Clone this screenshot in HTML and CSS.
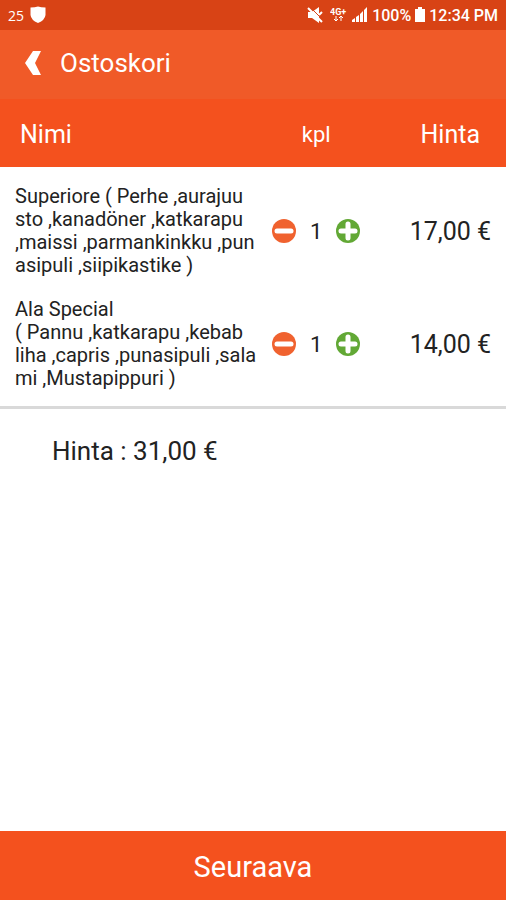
FILE: index.html
```
<!DOCTYPE html>
<html lang="fi">
<head>
<meta charset="utf-8">
<meta name="viewport" content="width=device-width, initial-scale=1">
<title>Ostoskori</title>
<link rel="stylesheet" href="styles.css">
</head>

<body>
<div class="status">
	<span class="temp">25</span>
	<svg class="shield" width="16" height="18" viewBox="0 0 16 18"><path d="M0.500 1.500Q5 1.500 8 0.500Q11 1.500 15.500 1.500V9Q15 14 8 17Q1 14 0.500 9Z" fill="#fff"/></svg>
	<div class="status-right">
		<svg width="16" height="18" viewBox="0 0 16 18"><path d="M1 6H5L12 1V17L5 12H1Z" fill="#fff"/><path d="M3 1L16 14" stroke="#d84315" stroke-width="1"/><path d="M1 2L15 16M12 9L15 6" stroke="#fff" stroke-width="2"/></svg>
		<svg class="net" width="17" height="18" viewBox="0 0 17 18"><text x="0" y="9" class="net-text">4G+</text><path d="M6 10V15M4 13L6 15L8 13M11 15V10M9 12L11 10L13 12" fill="none" stroke="#fff" stroke-width="1"/></svg>
		<svg class="signal" width="17" height="18" viewBox="0 0 17 18"><path d="M1 16V14L4 12V16ZM5 16V11L8 9V16ZM9 16V8L12 5V16ZM13 16V4L16 1V16Z" fill="#fff"/></svg>
		<span class="level">100%</span>
		<svg class="battery" width="10" height="18" viewBox="0 0 10 18"><path d="M3 1H7V3H10V16H0V3H3Z" fill="#fff"/></svg>
		<span class="time">12:34 PM</span>
	</div>
</div>
<header class="bar">
	<button type="button" class="back" aria-label="Takaisin"><svg width="18" height="26" viewBox="0 0 18 26"><path d="M9 1H17L11 13L17 25H9L1 13Z" fill="#fff"/></svg></button>
	<h1>Ostoskori</h1>
</header>
<main>
	<table class="cart">
		<thead>
			<tr>
				<th class="name">Nimi</th>
				<th class="qty">kpl</th>
				<th class="price">Hinta</th>
			</tr>
		</thead>
		<tbody>
			<tr>
				<td class="name">Superiore ( Perhe ,aurajuu<br>sto ,kanadöner ,katkarapu<br>,maissi ,parmankinkku ,pun<br>asipuli ,siipikastike )</td>
				<td class="qty">
					<div class="stepper">
						<button type="button" aria-label="Vähennä"><svg width="24" height="24" viewBox="0 0 24 24"><circle cx="12" cy="12" r="12" fill="#f0622f"/><path d="M5 12H19" stroke="#fff" stroke-width="5" stroke-linecap="round"/></svg></button>
						<span>1</span>
						<button type="button" aria-label="Lisää"><svg width="24" height="24" viewBox="0 0 24 24"><circle cx="12" cy="12" r="12" fill="#62a835"/><path d="M5 12H19M12 5V19" stroke="#fff" stroke-width="5" stroke-linecap="round"/></svg></button>
					</div>
				</td>
				<td class="price">17,00 €</td>
			</tr>
			<tr>
				<td class="name">Ala Special<br>( Pannu ,katkarapu ,kebab<br>liha ,capris ,punasipuli ,sala<br>mi ,Mustapippuri )</td>
				<td class="qty">
					<div class="stepper">
						<button type="button" aria-label="Vähennä"><svg width="24" height="24" viewBox="0 0 24 24"><circle cx="12" cy="12" r="12" fill="#f0622f"/><path d="M5 12H19" stroke="#fff" stroke-width="5" stroke-linecap="round"/></svg></button>
						<span>1</span>
						<button type="button" aria-label="Lisää"><svg width="24" height="24" viewBox="0 0 24 24"><circle cx="12" cy="12" r="12" fill="#62a835"/><path d="M5 12H19M12 5V19" stroke="#fff" stroke-width="5" stroke-linecap="round"/></svg></button>
					</div>
				</td>
				<td class="price">14,00 €</td>
			</tr>
		</tbody>
	</table>
	<p class="total">Hinta : 31,00 €</p>
</main>
<button type="button" class="next">Seuraava</button>
</body>
</html>
```

FILE: styles.css
```
* {padding:0;margin:0;box-sizing:border-box;}
body {display:flex;flex-direction:column;min-height:100vh;background:#fff;color:#222;font-family:Roboto,"Liberation Sans",sans-serif;}
button {border:0;background:none;color:inherit;font-family:inherit;cursor:pointer;}
svg {display:block;}

/* status bar */
.status {display:flex;align-items:center;height:30px;padding:0 8px;background:#d84315;color:#fff;font-size:16px;}
.temp {font-family:"Open Sans",sans-serif;font-size:14px;}
.shield {margin-left:6px;}
.status-right {display:flex;align-items:center;gap:4px;margin-left:auto;}
.net {margin-left:3px;}
.net-text {font-size:9px;font-weight:bold;fill:#fff;}
.level,.time {font-weight:500;}

/* title */
.bar {display:flex;align-items:center;height:69px;padding:0 24px 4px;background:#f05a28;color:#fff;}
.back {margin-right:18px;}
.bar h1 {font-size:26px;font-weight:normal;}

/* cart */
main {flex:1;}
.cart {width:100%;table-layout:fixed;border-spacing:0;border-bottom:3px solid #d9d9d9;padding-bottom:13px;}
.cart th {height:68px;padding-top:2px;background:#f4511e;color:#fff;font-size:25px;font-weight:normal;}
.cart td {padding:18px 0 3px;vertical-align:middle;}
.cart .name {width:50%;text-align:left;}
.cart .qty {width:25%;text-align:center;}
.cart .price {width:25%;text-align:right;}
.cart th.name {padding-left:20px;}
.cart th.qty {font-size:22px;}
.cart th.price {padding-right:26px;}
.cart td.name {padding-left:15px;font-size:20px;line-height:23px;white-space:nowrap;}
.cart td.price {padding-right:15px;font-size:25px;}
.stepper {display:flex;align-items:center;justify-content:center;gap:14px;font-size:22px;}
.total {padding:27px 52px;font-size:26px;line-height:30px;}

.next {height:69px;padding-top:3px;background:#f4511e;color:#fff;font-size:29px;}
```
